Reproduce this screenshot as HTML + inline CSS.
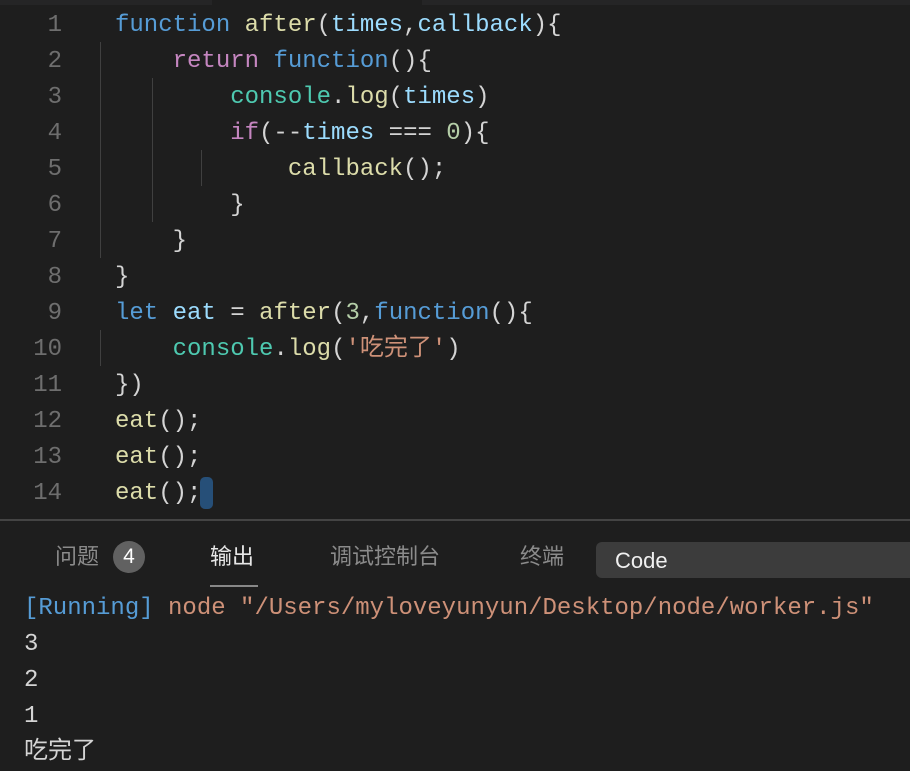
<!DOCTYPE html>
<html><head><meta charset="utf-8"><style>
body{margin:0;width:910px;height:768px;background:#1e1e1e;overflow:hidden;position:relative;font-family:"Liberation Mono","Noto Sans CJK SC",monospace;}
.top{position:absolute;left:0;top:0;width:910px;height:5px;background:#252526}
.top2{position:absolute;left:212px;top:0;width:210px;height:5px;background:#1e1e1e}
.ln{position:absolute;left:0;width:62px;text-align:right;color:#6e6e6e;font-size:24px;line-height:36px}
.code{position:absolute;left:115px;white-space:pre;font-size:24px;line-height:36px;color:#d4d4d4}
.k{color:#569cd6}.f{color:#dcdcaa}.p{color:#9cdcfe}.c{color:#c586c0}.t{color:#4ec9b0}.n{color:#b5cea8}.s{color:#ce9178}
.g{position:absolute;width:1px;background:#404040}
.sep{position:absolute;left:0;top:519px;width:910px;height:2px;background:#444}
.panel{position:absolute;left:0;top:521px;width:910px;height:247px;background:#1e1e1e}
.tab{position:absolute;top:541px;font-family:"Liberation Sans","Noto Sans CJK SC",sans-serif;font-size:22px;color:#8b8b8b;line-height:32px}
.out{position:absolute;left:24px;white-space:pre;font-size:24px;line-height:36px;color:#d4d4d4}
</style></head><body>
<div class="top"></div><div class="top2"></div>
<div class="ln" style="top:8px">1<br>2<br>3<br>4<br>5<br>6<br>7<br>8<br>9<br>10<br>11<br>12<br>13<br>14<br>15</div>
<div class="g" style="left:100px;top:42px;height:216px"></div>
<div class="g" style="left:152px;top:78px;height:144px"></div>
<div class="g" style="left:201px;top:150px;height:36px"></div>
<div class="g" style="left:100px;top:330px;height:36px"></div>
<div class="code" style="top:8px"><span class="k">function</span> <span class="f">after</span>(<span class="p">times</span>,<span class="p">callback</span>){
    <span class="c">return</span> <span class="k">function</span>(){
        <span class="t">console</span>.<span class="f">log</span>(<span class="p">times</span>)
        <span class="c">if</span>(--<span class="p">times</span> === <span class="n">0</span>){
            <span class="f">callback</span>();
        }
    }
}
<span class="k">let</span> <span class="p">eat</span> = <span class="f">after</span>(<span class="n">3</span>,<span class="k">function</span>(){
    <span class="t">console</span>.<span class="f">log</span>(<span class="s">'吃完了'</span>)
})
<span class="f">eat</span>();
<span class="f">eat</span>();
<span class="f">eat</span>();</div>
<div style="position:absolute;left:200px;top:477px;width:13px;height:32px;background:#264f78;border-radius:5px"></div>
<div class="sep"></div>
<div class="panel"></div>
<div class="tab" style="left:55px">问题</div>
<div style="position:absolute;left:113px;top:541px;width:32px;height:32px;border-radius:50%;background:#616161;color:#fff;font-family:'Liberation Sans',sans-serif;font-size:21px;line-height:32px;text-align:center">4</div>
<div class="tab" style="left:210px;color:#e7e7e7">输出</div>
<div style="position:absolute;left:210px;top:585px;width:48px;height:2px;background:#888"></div>
<div class="tab" style="left:330px">调试控制台</div>
<div class="tab" style="left:520px">终端</div>
<div style="position:absolute;left:596px;top:542px;width:330px;height:36px;background:#3c3c3c;border-radius:6px"></div>
<div style="position:absolute;left:615px;top:545px;font-family:'Liberation Sans',sans-serif;font-size:22px;line-height:32px;color:#f0f0f0">Code</div>
<div class="out" style="top:591px"><span style="color:#569cd6">[Running]</span> <span class="s">node "/Users/myloveyunyun/Desktop/node/worker.js"</span>
3
2
1
吃完了</div>
</body></html>
